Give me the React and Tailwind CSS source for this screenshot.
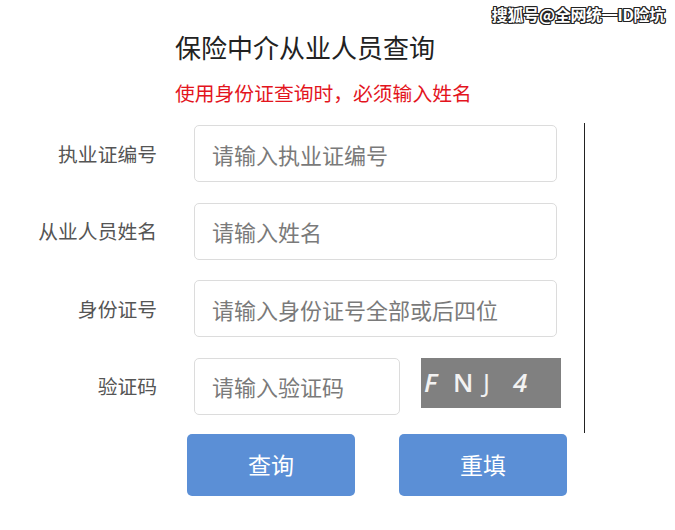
import React from 'react';

const fields = [
  { label: '执业证编号', placeholder: '请输入执业证编号' },
  { label: '从业人员姓名', placeholder: '请输入姓名' },
  { label: '身份证号', placeholder: '请输入身份证号全部或后四位' },
];

const App = () => {
  return (
    <div className="relative w-[675px] h-[530px] bg-white overflow-hidden font-['Noto_Sans_CJK_SC','Noto_Sans',sans-serif]">
      {/* watermark */}
      <div className="absolute top-[3px] right-[10px] text-[16px] leading-[22px] font-bold text-white tracking-[-0.3px] [text-shadow:1px_0_0_#222,-1px_0_0_#222,0_1px_0_#222,0_-1px_0_#222,1px_1px_0_#222,-1px_-1px_0_#222,1px_-1px_0_#222,-1px_1px_0_#222]">
        搜狐号@全网统一ID险坑
      </div>

      <div className="pl-[175px] pt-[32px]">
        <h1 className="text-[26px] leading-[30px] text-[#222] font-normal">保险中介从业人员查询</h1>
        <p className="mt-[19px] text-[19.8px] leading-[24px] text-[#e3141d]">使用身份证查询时，必须输入姓名</p>
      </div>

      <div className="mt-[18px] w-[585px] border-r-[1.5px] border-[#222] pt-[2px] pb-[18px] flex flex-col gap-[20.5px]">
        {fields.map((f) => (
          <div key={f.label} className="flex items-center">
            <label className="w-[157px] text-right text-[19.8px] leading-[24px] text-[#555]">{f.label}</label>
            <input
              className="ml-[37px] w-[363px] h-[57px] border border-[#dcdcdc] rounded-[5px] pl-[17px] text-[22px] text-[#333] placeholder:text-[#7a7a7a] outline-none"
              placeholder={f.placeholder}
            />
          </div>
        ))}
        <div className="flex items-start">
          <label className="w-[157px] h-[57px] flex items-center justify-end text-[19.8px] leading-[24px] text-[#555]">验证码</label>
          <input
            className="ml-[37px] w-[206px] h-[57px] border border-[#dcdcdc] rounded-[5px] pl-[17px] text-[22px] text-[#333] placeholder:text-[#7a7a7a] outline-none"
            placeholder="请输入验证码"
          />
          <div className="ml-[21px] w-[140px] h-[50px] bg-[#808080] flex items-center pl-[3px] font-['Open_Sans',sans-serif] font-semibold text-[26px] text-[#f2f2f2]">
            <span className="w-[29px] italic">F</span>
            <span className="w-[30px]">N</span>
            <span className="w-[30px] font-normal">J</span>
            <span className="w-[30px] italic">4</span>
          </div>
        </div>
      </div>

      <div className="flex pl-[187px] gap-[44px] mt-[1px]">
        <button className="w-[168px] h-[62px] rounded-[5px] bg-[#5b8fd6] text-white text-[23px]">查询</button>
        <button className="w-[168px] h-[62px] rounded-[5px] bg-[#5b8fd6] text-white text-[23px]">重填</button>
      </div>
    </div>
  );
};

export default App;
